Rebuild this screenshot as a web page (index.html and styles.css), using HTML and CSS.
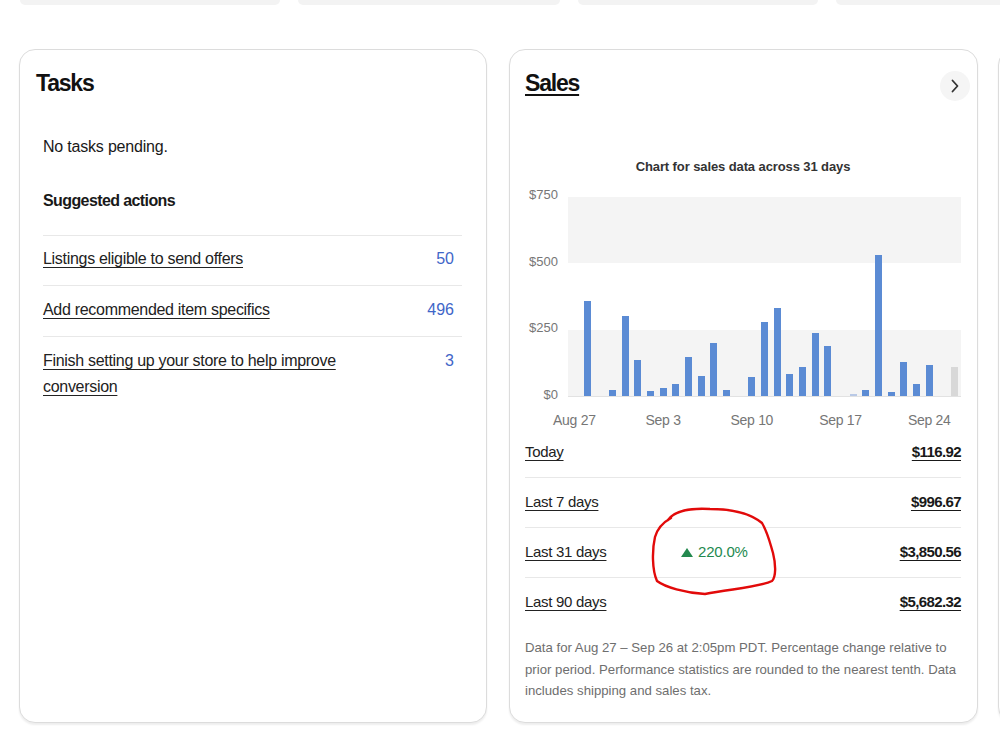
FILE: index.html
```html
<!DOCTYPE html>
<html lang="en">
<head>
  <meta charset="UTF-8" />
  <title>Seller Hub - Overview</title>
  <meta name="viewport" content="width=device-width, initial-scale=1" />
  <link rel="stylesheet" href="styles.css">
</head>
<body>

  <!-- cards of the row above, cut off -->
  <div class="top-strip">
    <div class="stub stub-a"></div>
    <div class="stub stub-b"></div>
    <div class="stub stub-c"></div>
    <div class="stub stub-d"></div>
  </div>

  <div class="cards">

    <section class="card tasks">
      <div class="card-head">
        <h2 class="card-title">Tasks</h2>
      </div>
      <div class="tasks-body">
        <p class="note">No tasks pending.</p>
        <p class="suggested">Suggested actions</p>
        <ul class="task-list">
          <li><a href="#">Listings eligible to send offers</a><span class="count">50</span></li>
          <li><a href="#">Add recommended item specifics</a><span class="count">496</span></li>
          <li><a href="#">Finish setting up your store to help improve conversion</a><span class="count">3</span></li>
        </ul>
      </div>
    </section>

    <section class="card sales">
      <div class="card-head">
        <h2 class="card-title"><a href="#">Sales</a></h2>
        <button class="chevron" aria-label="Go to sales">
          <svg width="8" height="14" viewBox="0 0 8 14"><path d="M1.5 1.5 L6.5 7 L1.5 12.5" fill="none" stroke="#333" stroke-width="1.8" stroke-linecap="round" stroke-linejoin="round"/></svg>
        </button>
      </div>

      <p class="chart-title">Chart for sales data across 31 days</p>

      <div class="chart">
        <div class="y-axis">
          <span>$750</span>
          <span>$500</span>
          <span>$250</span>
          <span>$0</span>
        </div>
        <div class="plot-wrap">
          <div class="plot">
            <div class="slot"></div>
            <div class="slot"><div class="bar" style="height:47.5%"></div></div>
            <div class="slot"></div>
            <div class="slot"><div class="bar" style="height:3%"></div></div>
            <div class="slot"><div class="bar" style="height:40%"></div></div>
            <div class="slot"><div class="bar" style="height:18%"></div></div>
            <div class="slot"><div class="bar" style="height:2.5%"></div></div>
            <div class="slot"><div class="bar" style="height:4%"></div></div>
            <div class="slot"><div class="bar" style="height:6%"></div></div>
            <div class="slot"><div class="bar" style="height:19.5%"></div></div>
            <div class="slot"><div class="bar" style="height:10%"></div></div>
            <div class="slot"><div class="bar" style="height:26.5%"></div></div>
            <div class="slot"><div class="bar" style="height:3%"></div></div>
            <div class="slot"></div>
            <div class="slot"><div class="bar" style="height:9.5%"></div></div>
            <div class="slot"><div class="bar" style="height:37%"></div></div>
            <div class="slot"><div class="bar" style="height:44%"></div></div>
            <div class="slot"><div class="bar" style="height:11%"></div></div>
            <div class="slot"><div class="bar" style="height:14.5%"></div></div>
            <div class="slot"><div class="bar" style="height:31.5%"></div></div>
            <div class="slot"><div class="bar" style="height:25%"></div></div>
            <div class="slot"></div>
            <div class="slot"><div class="bar faint" style="height:1%"></div></div>
            <div class="slot"><div class="bar" style="height:3%"></div></div>
            <div class="slot"><div class="bar" style="height:71%"></div></div>
            <div class="slot"><div class="bar" style="height:2%"></div></div>
            <div class="slot"><div class="bar" style="height:17%"></div></div>
            <div class="slot"><div class="bar" style="height:6%"></div></div>
            <div class="slot"><div class="bar" style="height:15.5%"></div></div>
            <div class="slot"></div>
            <div class="slot"><div class="bar today" style="height:14.5%"></div></div>
          </div>
          <div class="x-axis">
            <span class="day-0">Aug 27</span>
            <span class="day-7">Sep 3</span>
            <span class="day-14">Sep 10</span>
            <span class="day-21">Sep 17</span>
            <span class="day-28">Sep 24</span>
          </div>
        </div>
      </div>

      <ul class="period-list">
        <li><a class="period" href="#">Today</a><a class="amount" href="#">$116.92</a></li>
        <li><a class="period" href="#">Last 7 days</a><a class="amount" href="#">$996.67</a></li>
        <li><a class="period" href="#">Last 31 days</a><span class="change"><i class="up"></i>220.0%</span><a class="amount" href="#">$3,850.56</a></li>
        <li><a class="period" href="#">Last 90 days</a><a class="amount" href="#">$5,682.32</a></li>
      </ul>

      <p class="sales-note">Data for Aug 27 – Sep 26 at 2:05pm PDT. Percentage change relative to prior period. Performance statistics are rounded to the nearest tenth. Data includes shipping and sales tax.</p>

      <!-- hand drawn marker round the change -->
      <svg class="marker" width="130" height="95" viewBox="0 0 130 95">
        <path d="M18 15 C25 5, 40 3, 60 4 C80 4, 100 8, 112 18 C118 28, 120 38, 123 48 C126 60, 126 72, 122 76 C110 82, 80 84, 55 89 C35 88, 15 82, 7 76 C2 65, 2 45, 5 32 C7 25, 12 18, 21 13" fill="none" stroke="#e20a0a" stroke-width="2.4" stroke-linecap="round"/>
      </svg>
    </section>

    <section class="card peek"></section>

  </div>

</body>
</html>
```

FILE: styles.css
```css
* {
  box-sizing: border-box;
}
body {
  margin: 0;
  background: #fff;
  color: #191919;
  font-family: "Liberation Sans", Arial, sans-serif;
  overflow: hidden;
}
a {
  color: inherit;
}

/* Row above */
.top-strip {
  display: flex;
  gap: 18px;
  padding-left: 20px;
  height: 5px;
  overflow: hidden;
}
.stub {
  flex-shrink: 0;
  height: 5px;
  background: #f3f3f3;
  border-radius: 0 0 8px 8px;
}
.stub-a { width: 260px; }
.stub-b { width: 262px; }
.stub-c { width: 240px; }
.stub-d { width: 200px; }

/* Cards */
.cards {
  display: flex;
  gap: 22px;
  padding: 44px 0 4px 19px;
  align-items: stretch;
  overflow: hidden;
}
.card {
  position: relative;
  flex-shrink: 0;
  background: #fff;
  border: 1px solid #dcdcdc;
  border-radius: 16px;
  box-shadow: 0 2px 2px rgba(0, 0, 0, 0.07);
}
.tasks {
  width: 468px;
}
.sales {
  width: 469px;
  padding: 0 16px 20px 15px;
}
.peek {
  width: 300px;
  margin-left: -2px;
}
.card-head {
  display: flex;
  align-items: center;
  justify-content: space-between;
  padding-top: 19px;
  height: 47px;
}
.tasks .card-head {
  padding-left: 16px;
}
.card-title {
  margin: 0;
  font-size: 23px;
  line-height: 28px;
  font-weight: bold;
  letter-spacing: -1.2px;
  color: #111;
}
.card-title a {
  text-decoration-thickness: 2px;
  text-underline-offset: 3px;
}
.chevron {
  width: 30px;
  height: 30px;
  margin: 6px -9px 0 0;
  border: none;
  border-radius: 50%;
  background: #f5f5f5;
  display: flex;
  align-items: center;
  justify-content: center;
  padding: 0;
}

/* Tasks */
.tasks-body {
  padding: 0 24px 0 23px;
  font-size: 16px;
}
.note {
  margin: 38px 0 0;
  line-height: 24px;
  letter-spacing: -0.2px;
}
.suggested {
  margin: 30px 0 22px;
  line-height: 24px;
  font-weight: bold;
  letter-spacing: -0.6px;
}
.task-list {
  list-style: none;
  margin: 0;
  padding: 0;
}
.task-list li {
  display: flex;
  justify-content: space-between;
  gap: 20px;
  border-top: 1px solid #e8e8e8;
  padding: 11px 8px 13px 0;
  line-height: 26px;
}
.task-list li:first-child {
  padding-top: 10px;
}
.task-list a {
  max-width: 300px;
  color: #222;
  letter-spacing: -0.3px;
  text-underline-offset: 3px;
}
.count {
  color: #3f66c8;
}

/* Sales chart */
.chart-title {
  margin: 61px 0 0;
  text-align: center;
  font-size: 13px;
  line-height: 18px;
  font-weight: bold;
  letter-spacing: -0.1px;
  color: #333;
}
.chart {
  display: flex;
  align-items: flex-start;
  margin-top: 21px;
}
.y-axis {
  width: 33px;
  height: 214px;
  margin-top: -9px;
  display: flex;
  flex-direction: column;
  justify-content: space-between;
  align-items: flex-end;
  font-size: 13px;
  line-height: 14px;
  color: #767676;
}
.plot-wrap {
  flex: 1;
  margin-left: 10px;
}
.plot {
  height: 200px;
  display: grid;
  grid-template-columns: repeat(31, minmax(0, 1fr));
  background: linear-gradient(#f4f4f4 33.33%, #fff 33.33%, #fff 66.67%, #f4f4f4 66.67%);
  border-bottom: 1px solid #e2e2e2;
}
.slot {
  display: flex;
  justify-content: center;
  align-items: flex-end;
}
.bar {
  width: 7px;
  background: #5b8bd4;
}
.bar.faint {
  background: #b9c9e6;
}
.bar.today {
  background: #d8d8d8;
}
.x-axis {
  display: grid;
  grid-template-columns: repeat(31, minmax(0, 1fr));
  margin-top: 15px;
  font-size: 14px;
  line-height: 16px;
  letter-spacing: -0.3px;
  color: #767676;
}
.x-axis span {
  display: flex;
  justify-content: center;
  white-space: nowrap;
}
.day-0 { grid-column: 1; }
.day-7 { grid-column: 8; }
.day-14 { grid-column: 15; }
.day-21 { grid-column: 22; }
.day-28 { grid-column: 29; }

/* Sales periods */
.period-list {
  list-style: none;
  margin: 0;
  padding: 0;
}
.period-list li {
  display: flex;
  align-items: center;
  padding: 13px 0 14px;
  line-height: 22px;
  font-size: 15px;
  border-bottom: 1px solid #e8e8e8;
}
.period-list li:last-child {
  border-bottom: none;
}
.period {
  width: 156px;
  flex-shrink: 0;
  color: #222;
  letter-spacing: -0.3px;
  text-underline-offset: 3px;
}
.change {
  display: flex;
  align-items: center;
  color: #23894f;
  letter-spacing: -0.2px;
}
.up {
  width: 0;
  height: 0;
  margin-right: 5px;
  border-left: 6px solid transparent;
  border-right: 6px solid transparent;
  border-bottom: 9px solid #23894f;
}
.amount {
  margin-left: auto;
  font-weight: bold;
  color: #191919;
  letter-spacing: -0.6px;
  text-underline-offset: 3px;
}
.sales-note {
  margin: 10px 0 0;
  font-size: 13.2px;
  line-height: 21.5px;
  color: #6e6e6e;
}

/* Red marker */
.marker {
  position: absolute;
  left: 140px;
  top: 455px;
  pointer-events: none;
}
```
